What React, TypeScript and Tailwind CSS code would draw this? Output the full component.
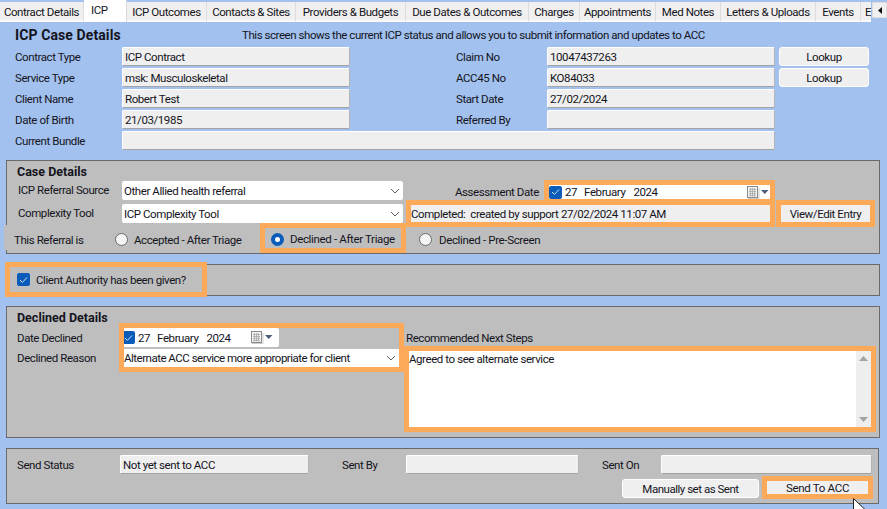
import React from "react";

const Field = ({ w, children, className = "" }: { w: string; children?: React.ReactNode; className?: string }) => (
  <div className={`${w} h-[19px] shrink-0 flex items-center pl-[2px] bg-[#efefef] border border-t-white border-l-white border-b-[#a3a3a3] border-r-[#b5b5b5] rounded-[2px] whitespace-nowrap ${className}`}>
    {children}
  </div>
);

const Chevron = () => (
  <svg width="10" height="6" viewBox="0 0 10 6" className="shrink-0">
    <path d="M1 1l4 4 4-4" fill="none" stroke="#606060" strokeWidth="1" />
  </svg>
);

const Select = ({ w, children }: { w: string; children: React.ReactNode }) => (
  <div className={`${w} flex items-center justify-between bg-white pr-[3px] whitespace-nowrap`}>
    <span>{children}</span>
    <Chevron />
  </div>
);

const Check = () => (
  <span className="w-[13px] h-[13px] shrink-0 rounded-[2px] bg-[#0a5cb8] flex items-center justify-center">
    <svg width="9" height="8" viewBox="0 0 9 8">
      <path d="M1 4l2.4 2.4L8 1.5" fill="none" stroke="#cfe2f7" strokeWidth="1" />
    </svg>
  </span>
);

const DateValue = ({ clip = false }: { clip?: boolean }) => (
  <div className="w-full h-full bg-white flex items-center whitespace-nowrap overflow-hidden">
    <span className={clip ? "-ml-[2px]" : ""}>
      <Check />
    </span>
    <span className="ml-[3px]">27</span>
    <span className="ml-[7px]">February</span>
    <span className="ml-[8px]">2024</span>
    <svg width="22" height="13" viewBox="0 0 22 13" className={`ml-auto shrink-0 ${clip ? "mr-[6px]" : "mr-[1px]"}`}>
      <rect x="0.5" y="0.5" width="10" height="11" fill="#f2f2f2" stroke="#8a8a8a" />
      <path d="M2 3.5h7M2 5.5h7M2 7.5h7M2 9.5h7M3.5 2v8.5M5.5 2v8.5M7.5 2v8.5" stroke="#a0a0a0" strokeWidth="0.7" />
      <path d="M1 12.5h11V2" fill="none" stroke="#cccccc" />
      <path d="M14 4h7.5l-3.75 4z" fill="#4b5a75" />
    </svg>
  </div>
);

const Radio = ({ on = false }: { on?: boolean }) =>
  on ? (
    <span className="w-[13px] h-[13px] shrink-0 rounded-full bg-[#0a5cb8] flex items-center justify-center">
      <span className="w-[5px] h-[5px] rounded-full bg-white" />
    </span>
  ) : (
    <span className="w-[13px] h-[13px] shrink-0 rounded-full bg-[#f4f4f4] border border-[#6a6a6a]" />
  );

const tabs = [
  ["Contract Details", "w-[84px]"],
  ["ICP", "w-[43px]"],
  ["ICP Outcomes", "w-[80px]"],
  ["Contacts & Sites", "w-[89px]"],
  ["Providers & Budgets", "w-[110px]"],
  ["Due Dates & Outcomes", "w-[123px]"],
  ["Charges", "w-[51px]"],
  ["Appointments", "w-[76px]"],
  ["Med Notes", "w-[65px]"],
  ["Letters & Uploads", "w-[95px]"],
  ["Events", "w-[45px]"],
];

const rows: [string, string, string, string, boolean][] = [
  ["Contract Type", "ICP Contract", "Claim No", "10047437263", true],
  ["Service Type", "msk: Musculoskeletal", "ACC45 No", "KO84033", true],
  ["Client Name", "Robert Test", "Start Date", "27/02/2024", false],
  ["Date of Birth", "21/03/1985", "Referred By", "", false],
];

export default function App() {
  return (
    <div className="relative w-[887px] h-[509px] overflow-hidden bg-[#a2c1ee] text-[11.5px] tracking-[-0.42px] leading-[16px] text-[#14141c] font-['Roboto','Liberation_Sans',sans-serif]">
      {/* Tabs */}
      <div className="flex h-[22px] items-start">
        {tabs.map(([t, w]) =>
          t === "ICP" ? (
            <div key={t} className={`${w} h-[22px] bg-white pl-[7px] pt-[2px] shrink-0 border-r border-[#d9d9d9]`}>{t}</div>
          ) : (
            <div key={t} className={`${w} mt-[2px] h-[20px] bg-[#f0f0f0] border-r border-b-2 border-r-[#dcdcdc] border-b-[#fafafa] text-center pt-[2px] shrink-0 whitespace-nowrap`}>{t}</div>
          )
        )}
        <div className="w-[10px] mt-[2px] h-[20px] bg-[#f0f0f0] border-b-2 border-b-[#fafafa] overflow-hidden pt-[2px] pl-[4px] shrink-0">E</div>
        <div className="ml-[1px] mt-[2px] w-[15px] h-[16px] bg-[#f0f0f0] border border-[#dcdcdc] flex items-center justify-center shrink-0">
          <svg width="4" height="7" viewBox="0 0 4 7"><path d="M4 0v7L0 3.5z" fill="#111" /></svg>
        </div>
      </div>

      {/* ICP case details */}
      <div className="flex h-[25px] items-center pl-[15px]">
        <span className="w-[227px] font-bold text-[14px] tracking-[0.1px]">ICP Case Details</span>
        <span className="tracking-[-0.45px]">This screen shows the current ICP status and allows you to submit information and updates to ACC</span>
      </div>
      {rows.map(([a, b, c, d, lookup]) => (
        <div key={a} className="flex h-[21px] pl-[15px] items-start">
          <span className="w-[107px] shrink-0 pt-[2px]">{a}</span>
          <Field w="w-[228px]">{b}</Field>
          <span className="ml-[106px] w-[91px] shrink-0 pt-[2px]">{c}</span>
          <Field w="w-[228px]">{d}</Field>
          {lookup && (
            <div className="ml-[4px] w-[90px] h-[19px] bg-[#efefef] border border-white rounded-[3px] flex items-center justify-center">Lookup</div>
          )}
        </div>
      ))}
      <div className="flex h-[29px] pl-[15px] items-start">
        <span className="w-[107px] shrink-0 pt-[2px]">Current Bundle</span>
        <Field w="w-[653px]" />
      </div>

      {/* Case Details */}
      <div className="mx-[6px] w-[874px] h-[94px] bg-[#bebebe] border border-[#6a6a6a]">
        <div className="h-[19px] pl-[10px] pt-[3px] font-bold text-[12.5px] tracking-normal">Case Details</div>
        <div className="flex h-[20px] items-start">
          <span className="w-[115px] pl-[11px] pt-[2px] shrink-0">ICP Referral Source</span>
          <Select w="w-[281px] h-[19px] mt-[1px] pl-[2px] rounded-[2px]">Other Allied health referral</Select>
          <span className="ml-[52px] w-[89px] pt-[4px] shrink-0 whitespace-nowrap">Assessment Date</span>
          <div className="w-[231px] h-[20px] border-[5px] border-b border-[#fda95a] shrink-0">
            <DateValue />
          </div>
        </div>
        <div className="flex h-[23px] items-start">
          <span className="w-[115px] pl-[11px] pt-[5px] shrink-0">Complexity Tool</span>
          <Select w="w-[281px] h-[19px] mt-[4px] pl-[2px] rounded-[2px]">ICP Complexity Tool</Select>
          <div className="ml-[3px] w-[369px] h-[27px] border-[5px] border-[#fda95a] bg-[#efefef] flex items-center shrink-0 relative z-10 whitespace-pre">Completed:  created by support 27/02/2024 11:07 AM</div>
          <div className="ml-px w-[99px] h-[27px] border-[5px] border-[#fda95a] bg-[#efefef] flex items-center justify-center shrink-0 relative z-10">View/Edit Entry</div>
        </div>
        <div className="flex h-[30px] items-start">
          <div className="-ml-[3px] mt-[2px] w-[256px] h-[25px] pt-[4px] bg-[#bebebe] flex items-center shrink-0">
            <span className="pl-[10px] w-[111px] shrink-0">This Referral is</span>
            <Radio />
            <span className="ml-[6px] whitespace-nowrap">Accepted - After Triage</span>
          </div>
          <div className="w-[146px] h-[30px] border-[5px] border-[#fda95a] flex items-center pl-[6px] pt-[2px] shrink-0">
            <Radio on />
            <span className="ml-[6px] whitespace-nowrap tracking-[-0.35px]">Declined - After Triage</span>
          </div>
          <div className="ml-[13px] mt-[2px] h-[25px] pt-[4px] flex items-center">
            <Radio />
            <span className="ml-[7px] whitespace-nowrap tracking-[-0.35px]">Declined - Pre-Screen</span>
          </div>
        </div>
      </div>

      {/* Client Authority */}
      <div className="mt-[10px] mx-[6px] w-[874px] h-[32px] bg-[#bebebe] border border-[#6a6a6a]">
        <div className="-ml-[2px] -mt-[3px] w-[202px] h-[35px] border-[5px] border-[#fda95a] flex items-center pl-[7px]">
          <Check />
          <span className="ml-[6px] whitespace-nowrap">Client Authority has been given?</span>
        </div>
      </div>

      {/* Declined Details */}
      <div className="mt-[10px] mx-[6px] w-[874px] h-[132px] bg-[#bebebe] border border-[#6a6a6a]">
        <div className="h-[16px] pl-[10px] pt-[3px] font-bold text-[12.5px] tracking-normal">Declined Details</div>
        <div className="flex items-start">
          <div className="w-[112px] shrink-0 pl-[10px]">
            <div className="h-[21px] pt-[7px]">Date Declined</div>
            <div className="pt-[6px]">Declined Reason</div>
          </div>
          <div className="w-[285px] h-[49px] shrink-0 border-[5px] border-[#fda95a] flex flex-col">
            <div className="h-[19px] w-[155px] shrink-0 rounded-r-[2px] overflow-hidden">
              <DateValue clip />
            </div>
            <Select w="w-full h-[18px] mt-[2px] tracking-[-0.5px]">Alternate ACC service more appropriate for client</Select>
          </div>
          <div className="w-[472px] shrink-0">
            <div className="h-[23px] pl-[2px] pt-[7px]">Recommended Next Steps</div>
            <div className="h-[86px] border-[5px] border-[#fda95a] bg-white flex">
              <div className="flex-1">Agreed to see alternate service</div>
              <div className="w-[15px] bg-[#eeeeee] flex flex-col items-center justify-between py-[5px]">
                <svg width="9" height="5" viewBox="0 0 9 5"><path d="M4.5 0L9 5H0z" fill="#a3a3a3" /></svg>
                <svg width="9" height="5" viewBox="0 0 9 5"><path d="M4.5 5L9 0H0z" fill="#a3a3a3" /></svg>
              </div>
            </div>
          </div>
        </div>
      </div>

      {/* Send */}
      <div className="mt-[10px] mx-[6px] w-[873px] h-[56px] bg-[#bebebe] border border-[#6a6a6a]">
        <div className="flex h-[24px] pt-[6px] items-start">
          <span className="w-[113px] pl-[10px] pt-[2px] shrink-0">Send Status</span>
          <Field w="w-[189px]">Not yet sent to ACC</Field>
          <span className="ml-[33px] w-[64px] pt-[2px] shrink-0">Sent By</span>
          <Field w="w-[173px]" />
          <span className="ml-[23px] w-[59px] pt-[2px] shrink-0">Sent On</span>
          <Field w="w-[211px]" />
        </div>
        <div className="flex items-start">
          <div className="ml-[615px] mt-[6px] w-[137px] h-[19px] bg-[#efefef] border border-white rounded-[3px] flex items-center justify-center shrink-0 tracking-[-0.48px]">Manually set as Sent</div>
          <div className="ml-[3px] mt-[3px] w-[111px] h-[23px] border-[5px] border-[#fda95a] bg-[#efefef] flex items-center justify-center shrink-0 tracking-[-0.3px]">Send To ACC</div>
        </div>
      </div>

      {/* Cursor */}
      <svg className="absolute left-[853px] top-[498px]" width="13" height="12" viewBox="0 0 13 12">
        <path d="M0.5 0.5L0.5 11.5H12L0.5 0.5Z" fill="#fff" stroke="#222" strokeWidth="1" />
      </svg>
    </div>
  );
}
